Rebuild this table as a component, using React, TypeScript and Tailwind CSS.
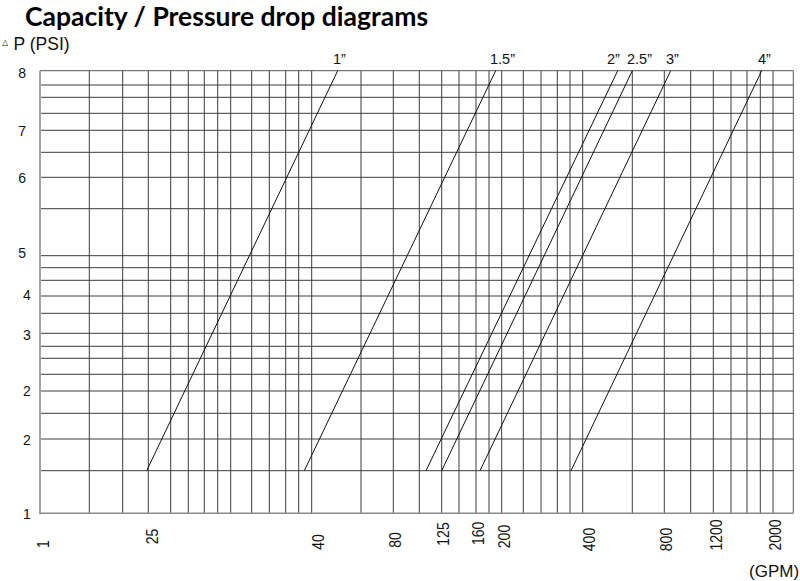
const xs = [
  89.3, 122.7, 148.3, 170.7, 188.3, 204.3, 217.7, 230.7, 251.7, 269.3, 285.7, 298.7, 311.7, 361, 393.3,
  419.3, 441.7, 459, 476, 489, 501.7, 523.3, 541, 557.3, 570, 582.7, 632.3, 664.3, 690.7, 713.3, 731,
  747, 760.3, 773,
];
const ys = [
  85, 97.3, 113.3, 130.3, 152.3, 177.3, 208.7, 255.7, 267.7, 280.3, 296, 313.3, 333.3, 346.3, 358.3,
  374.3, 391, 413.3, 439, 470.7,
];

const LEFT = 40;
const RIGHT = 793.3;
const TOP = 70.7;
const BOTTOM = 513.3;

// pipe size curves: x at the bottom line (470.7) and at the top border
const curves = [
  { label: "1\u201d", x0: 146.7, x1: 337.7, tx: 333 },
  { label: "1.5\u201d", x0: 304.3, x1: 495.7, tx: 490 },
  { label: "2\u201d", x0: 426, x1: 617.7, tx: 607 },
  { label: "2.5\u201d", x0: 441.7, x1: 632.3, tx: 627 },
  { label: "3\u201d", x0: 480, x1: 670.7, tx: 666 },
  { label: "4\u201d", x0: 571, x1: 761.7, tx: 758 },
];

const yLabels = [
  { t: "8", y: 73.3, x: 26 },
  { t: "7", y: 130.7, x: 26 },
  { t: "6", y: 177.7, x: 26 },
  { t: "5", y: 252.7, x: 26 },
  { t: "4", y: 295, x: 30.7 },
  { t: "3", y: 335, x: 30.7 },
  { t: "2", y: 391, x: 30.7 },
  { t: "2", y: 440, x: 30.7 },
  { t: "1", y: 514.3, x: 30.7 },
];

const xLabels = [
  { t: "1", x: 43.5, y: 544 },
  { t: "25", x: 152.5, y: 536.5 },
  { t: "40", x: 318.5, y: 542 },
  { t: "80", x: 396, y: 540 },
  { t: "125", x: 444, y: 534 },
  { t: "160", x: 479, y: 533.3 },
  { t: "200", x: 504.5, y: 536.5 },
  { t: "400", x: 589.5, y: 539.5 },
  { t: "800", x: 666.5, y: 539.5 },
  { t: "1200", x: 716.5, y: 535 },
  { t: "2000", x: 775.5, y: 535 },
];

function Chart() {
  return (
    <svg
      width={800}
      height={549}
      viewBox="0 32 800 549"
      className="block"
      fontFamily="'Liberation Sans', Arial, sans-serif"
    >
      <text x={2} y={44.5} fontSize={8} fontFamily="'DejaVu Sans', sans-serif" fill="#222">
        △
      </text>
      <text x={13.5} y={50} fontSize={17.5} fill="#111">
        P (PSI)
      </text>

      {/* grid */}
      {ys.map((y) => (
        <line key={"h" + y} x1={LEFT} x2={RIGHT} y1={y} y2={y} stroke="#3c3c3c" strokeWidth={1} />
      ))}
      {xs.map((x) => (
        <line key={"v" + x} x1={x} x2={x} y1={TOP} y2={BOTTOM} stroke="#3c3c3c" strokeWidth={1} />
      ))}
      <line x1={LEFT} x2={RIGHT} y1={TOP} y2={TOP} stroke="#555" strokeWidth={1} />
      <line x1={RIGHT} x2={RIGHT} y1={TOP} y2={BOTTOM} stroke="#555" strokeWidth={1} />
      <line x1={LEFT} x2={LEFT} y1={TOP} y2={BOTTOM + 1} stroke="#a3a3a3" strokeWidth={2} />
      <line x1={LEFT} x2={RIGHT} y1={BOTTOM} y2={BOTTOM} stroke="#8a8a8a" strokeWidth={1.5} />

      {/* curves */}
      {curves.map((c) => (
        <g key={c.label}>
          <line x1={c.x0} y1={470.7} x2={c.x1} y2={TOP} stroke="#111" strokeWidth={1} />
          <text x={c.tx} y={63.5} fontSize={14.5} fill="#111">
            {c.label}
          </text>
        </g>
      ))}

      {yLabels.map((l, i) => (
        <text key={i} x={l.x} y={l.y + 5} fontSize={14} textAnchor="end" fill="#111">
          {l.t}
        </text>
      ))}

      {xLabels.map((l) => (
        <text
          key={l.t}
          transform={`translate(${l.x} ${l.y}) rotate(-90) scale(1 1.2)`}
          x={0}
          y={4.2}
          fontSize={14}
          textAnchor="middle"
          fill="#111"
        >
          {l.t}
        </text>
      ))}

      <text x={749} y={577.3} fontSize={17} fill="#111">
        (GPM)
      </text>
    </svg>
  );
}

export default function App() {
  return (
    <div className="w-[800px] h-[581px] overflow-hidden bg-white">
      <h1 className="pl-[25px] h-[32px] text-[26.5px] leading-[32px] font-bold text-black font-['Lato',sans-serif] whitespace-nowrap">
        Capacity / Pressure drop diagrams
      </h1>
      <Chart />
    </div>
  );
}
